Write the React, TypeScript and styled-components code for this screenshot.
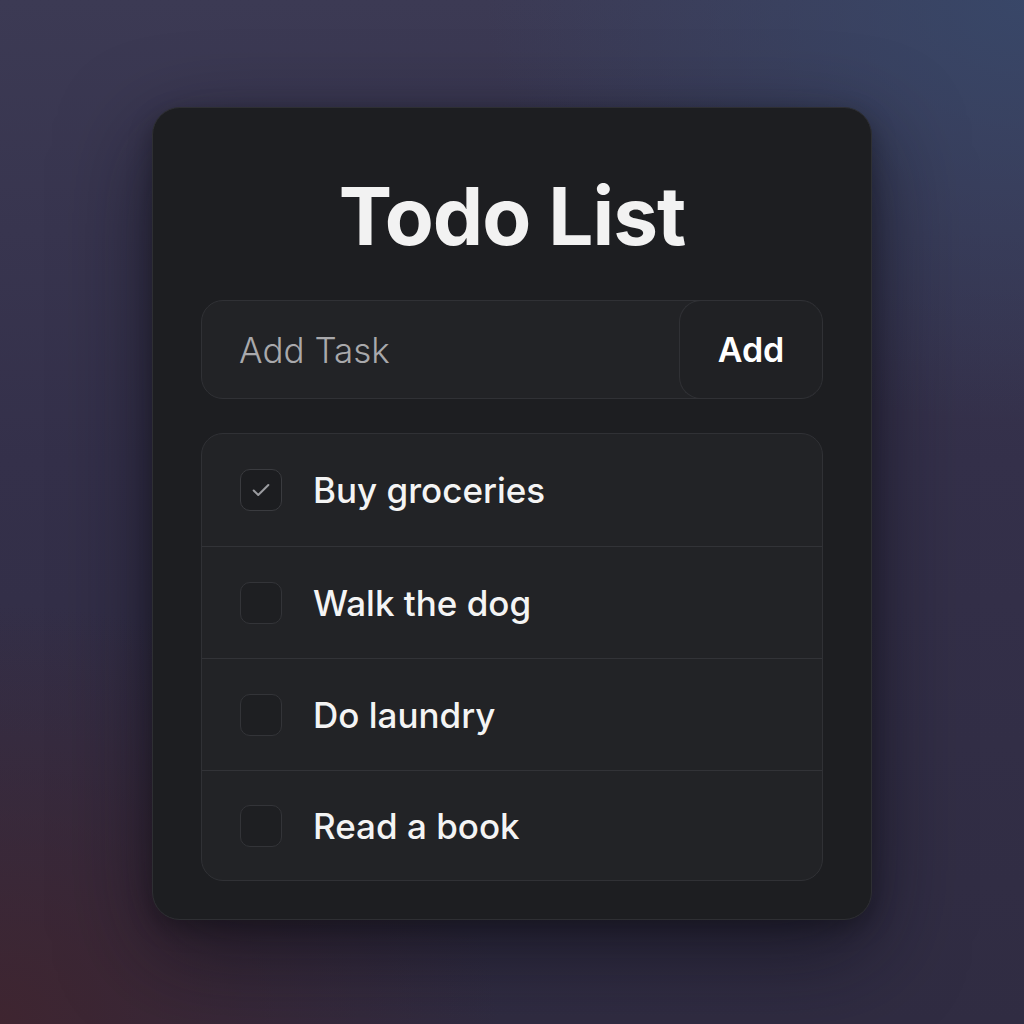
import { useState } from 'react';
import styled, { createGlobalStyle } from 'styled-components';

const GlobalStyle = createGlobalStyle`
  html, body {
    margin: 0;
    padding: 0;
  }
  body {
    font-family: Inter, "Noto Sans", sans-serif;
    -webkit-font-smoothing: antialiased;
  }
`;

const Page = styled.main`
  width: 1024px;
  height: 1024px;
  display: flex;
  align-items: flex-start;
  justify-content: center;
  padding-top: 107px;
  box-sizing: border-box;
  position: relative;
  overflow: hidden;
  background:
    radial-gradient(ellipse 65% 55% at 0% 100%, rgba(64, 36, 46, 0.9), rgba(64, 36, 46, 0) 75%),
    radial-gradient(ellipse 70% 55% at 100% 0%, rgba(56, 72, 106, 0.9), rgba(56, 72, 106, 0) 75%),
    linear-gradient(180deg, #3c3a54 0%, #34304a 45%, #302c42 100%);
`;

const Card = styled.section`
  position: relative;
  width: 720px;
  height: 813px;
  box-sizing: border-box;
  padding: 68px 48px 0;
  background: #1d1e21;
  border: 1px solid #2e2f33;
  border-radius: 28px;
  box-shadow: 0 30px 90px rgba(12, 12, 20, 0.6), 0 8px 24px rgba(0, 0, 0, 0.3);
  display: flex;
  flex-direction: column;
`;

const Title = styled.h1`
  margin: 0;
  text-align: center;
  color: #f2f2f2;
  font-size: 80px;
  font-weight: 700;
  letter-spacing: -1px;
  line-height: 80px;
  height: 80px;
`;

const InputRow = styled.form`
  margin-top: 44px;
  height: 99px;
  display: flex;
  box-sizing: border-box;
  border: 1px solid #303135;
  border-radius: 22px;
  background: #222326;
  overflow: hidden;
`;

const TaskInput = styled.input`
  flex: 1;
  min-width: 0;
  border: none;
  outline: none;
  background: transparent;
  padding: 0 0 0 37px;
  color: #e8e8e8;
  font-family: Inter, sans-serif;
  font-size: 35px;
  font-weight: 300;

  &::placeholder {
    color: #a9a9ac;
  }
`;

const AddButton = styled.button`
  width: 143px;
  border: 1px solid #303135;
  border-right: none;
  margin: -1px 0;
  border-radius: 22px;
  background: #202124;
  color: #ffffff;
  font-family: Inter, sans-serif;
  font-size: 34px;
  font-weight: 600;
  cursor: pointer;
`;

const List = styled.ul`
  list-style: none;
  margin: 34px 0 0;
  padding: 0;
  border: 1px solid #303135;
  border-radius: 22px;
  background: #222326;
  overflow: hidden;
`;

const Row = styled.li`
  height: 112px;
  display: flex;
  align-items: center;
  gap: 31px;
  padding-left: 38px;
  box-sizing: border-box;

  & + & {
    border-top: 1px solid #323337;
  }

  &:last-child {
    height: 110px;
  }
`;

const Box = styled.button<{ $checked: boolean }>`
  width: 42px;
  height: 42px;
  flex-shrink: 0;
  padding: 0;
  box-sizing: border-box;
  border-radius: 10px;
  border: 1px solid ${(p) => (p.$checked ? '#3a3b3f' : '#333438')};
  background: ${(p) => (p.$checked ? '#1c1d20' : '#1e1f22')};
  display: flex;
  align-items: center;
  justify-content: center;
  cursor: pointer;
`;

const Label = styled.span`
  color: #f4f4f4;
  font-size: 35px;
  font-weight: 500;
`;

const Check = () => (
  <svg width="22" height="22" viewBox="0 0 24 24" fill="none">
    <path d="M4 12.5l5 5L20 6.5" stroke="#9a9b9f" strokeWidth="2.2" strokeLinecap="round" strokeLinejoin="round" />
  </svg>
);

const initial = [
  { text: 'Buy groceries', done: true },
  { text: 'Walk the dog', done: false },
  { text: 'Do laundry', done: false },
  { text: 'Read a book', done: false },
];

const App = () => {
  const [todos, setTodos] = useState(initial);
  const [value, setValue] = useState('');

  const add = (e: React.FormEvent) => {
    e.preventDefault();
    if (!value.trim()) return;
    setTodos([...todos, { text: value.trim(), done: false }]);
    setValue('');
  };

  const toggle = (i: number) =>
    setTodos(todos.map((t, idx) => (idx === i ? { ...t, done: !t.done } : t)));

  return (
    <Page>
      <GlobalStyle />
      <Card>
        <Title>Todo List</Title>
        <InputRow onSubmit={add}>
          <TaskInput placeholder="Add Task" value={value} onChange={(e) => setValue(e.target.value)} />
          <AddButton type="submit">Add</AddButton>
        </InputRow>
        <List>
          {todos.map((t, i) => (
            <Row key={t.text + i}>
              <Box $checked={t.done} onClick={() => toggle(i)} aria-label="toggle">
                {t.done && <Check />}
              </Box>
              <Label>{t.text}</Label>
            </Row>
          ))}
        </List>
      </Card>
    </Page>
  );
};

export default App;
